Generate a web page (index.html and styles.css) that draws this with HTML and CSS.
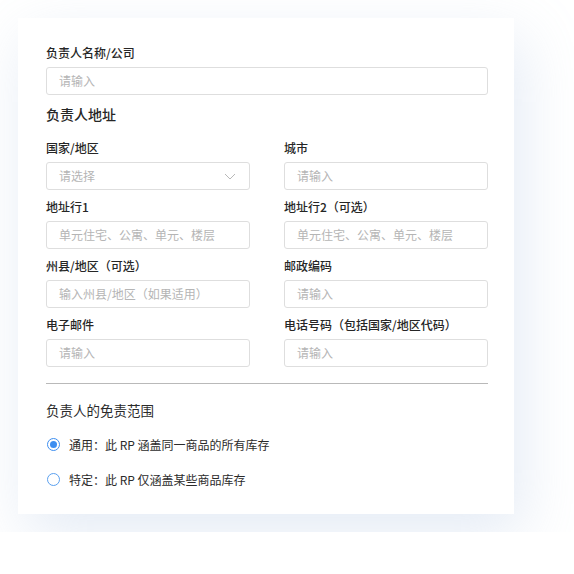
FILE: index.html
```html
<!DOCTYPE html>
<html lang="zh">
<head>
<meta charset="utf-8">
<link rel="stylesheet" href="styles.css">
</head>
<body>
<div class="card">
  <div class="field">
    <div class="label">负责人名称/公司</div>
    <div class="input">请输入</div>
  </div>
  <div class="section-title">负责人地址</div>
  <div class="grid">
    <div class="field">
      <div class="label">国家/地区</div>
      <div class="input select">请选择
        <svg class="chev" width="12" height="7" viewBox="0 0 12 7"><path d="M1 1 L6 6 L11 1" fill="none" stroke="#b8b8b8" stroke-width="1"/></svg>
      </div>
    </div>
    <div class="field">
      <div class="label">城市</div>
      <div class="input">请输入</div>
    </div>
    <div class="field">
      <div class="label">地址行1</div>
      <div class="input">单元住宅、公寓、单元、楼层</div>
    </div>
    <div class="field">
      <div class="label">地址行2（可选）</div>
      <div class="input">单元住宅、公寓、单元、楼层</div>
    </div>
    <div class="field">
      <div class="label">州县/地区（可选）</div>
      <div class="input">输入州县/地区（如果适用）</div>
    </div>
    <div class="field">
      <div class="label">邮政编码</div>
      <div class="input">请输入</div>
    </div>
    <div class="field">
      <div class="label">电子邮件</div>
      <div class="input">请输入</div>
    </div>
    <div class="field">
      <div class="label">电话号码（包括国家/地区代码）</div>
      <div class="input">请输入</div>
    </div>
  </div>
  <div class="divider"></div>
  <div class="scope-title">负责人的免责范围</div>
  <div class="radio-row first">
    <span class="radio checked"></span>
    <span class="radio-text">通用：此 RP 涵盖同一商品的所有库存</span>
  </div>
  <div class="radio-row">
    <span class="radio"></span>
    <span class="radio-text">特定：此 RP 仅涵盖某些商品库存</span>
  </div>
</div>
</body>
</html>
```

FILE: styles.css
```css
html, body {
  margin: 0;
  padding: 0;
  background: #ffffff;
}
body {
  padding: 18px;
  font-family: "Noto Sans CJK SC", "Noto Sans", sans-serif;
  color: #262626;
}
.card {
  width: 496px;
  height: 496px;
  box-sizing: border-box;
  padding: 25px 26px 0 28px;
  background: #ffffff;
  box-shadow: 8px 20px 56px rgba(165, 190, 222, 0.3);
}
.field {
  display: flex;
  flex-direction: column;
}
.label {
  font-size: 12px;
  line-height: 20px;
  font-weight: 500;
  color: #262626;
  margin-bottom: 4px;
  white-space: nowrap;
}
.input {
  height: 28px;
  box-sizing: border-box;
  border: 1px solid #dedede;
  border-radius: 3px;
  padding: 0 12px;
  font-size: 12px;
  line-height: 26px;
  color: #b5b5b5;
  display: flex;
  align-items: center;
  justify-content: space-between;
  white-space: nowrap;
}
.chev {
  margin-right: 1px;
}
.section-title {
  margin-top: 9px;
  font-size: 14px;
  line-height: 20px;
  font-weight: 500;
  color: #262626;
}
.grid {
  margin-top: 14px;
  display: grid;
  grid-template-columns: 204px 204px;
  column-gap: 34px;
  row-gap: 7px;
}
.divider {
  margin-top: 16px;
  height: 1px;
  background: #b9b9b9;
}
.scope-title {
  margin-top: 16px;
  font-size: 13.5px;
  line-height: 20px;
  color: #2b2b2b;
}
.radio-row {
  display: flex;
  align-items: center;
  height: 20px;
  margin-top: 15px;
}
.radio-row.first {
  margin-top: 14px;
}
.radio {
  width: 13px;
  height: 13px;
  box-sizing: border-box;
  border-radius: 50%;
  border: 1px solid #5aa0ef;
  margin-left: 1px;
  margin-right: 9px;
  position: relative;
}
.radio.checked {
  border-color: #3d8ef0;
}
.radio.checked::after {
  content: "";
  position: absolute;
  left: 2px;
  top: 2px;
  width: 7px;
  height: 7px;
  border-radius: 50%;
  background: #3d8ef0;
}
.radio-text {
  font-size: 12px;
  color: #2b2b2b;
  white-space: nowrap;
}
```
